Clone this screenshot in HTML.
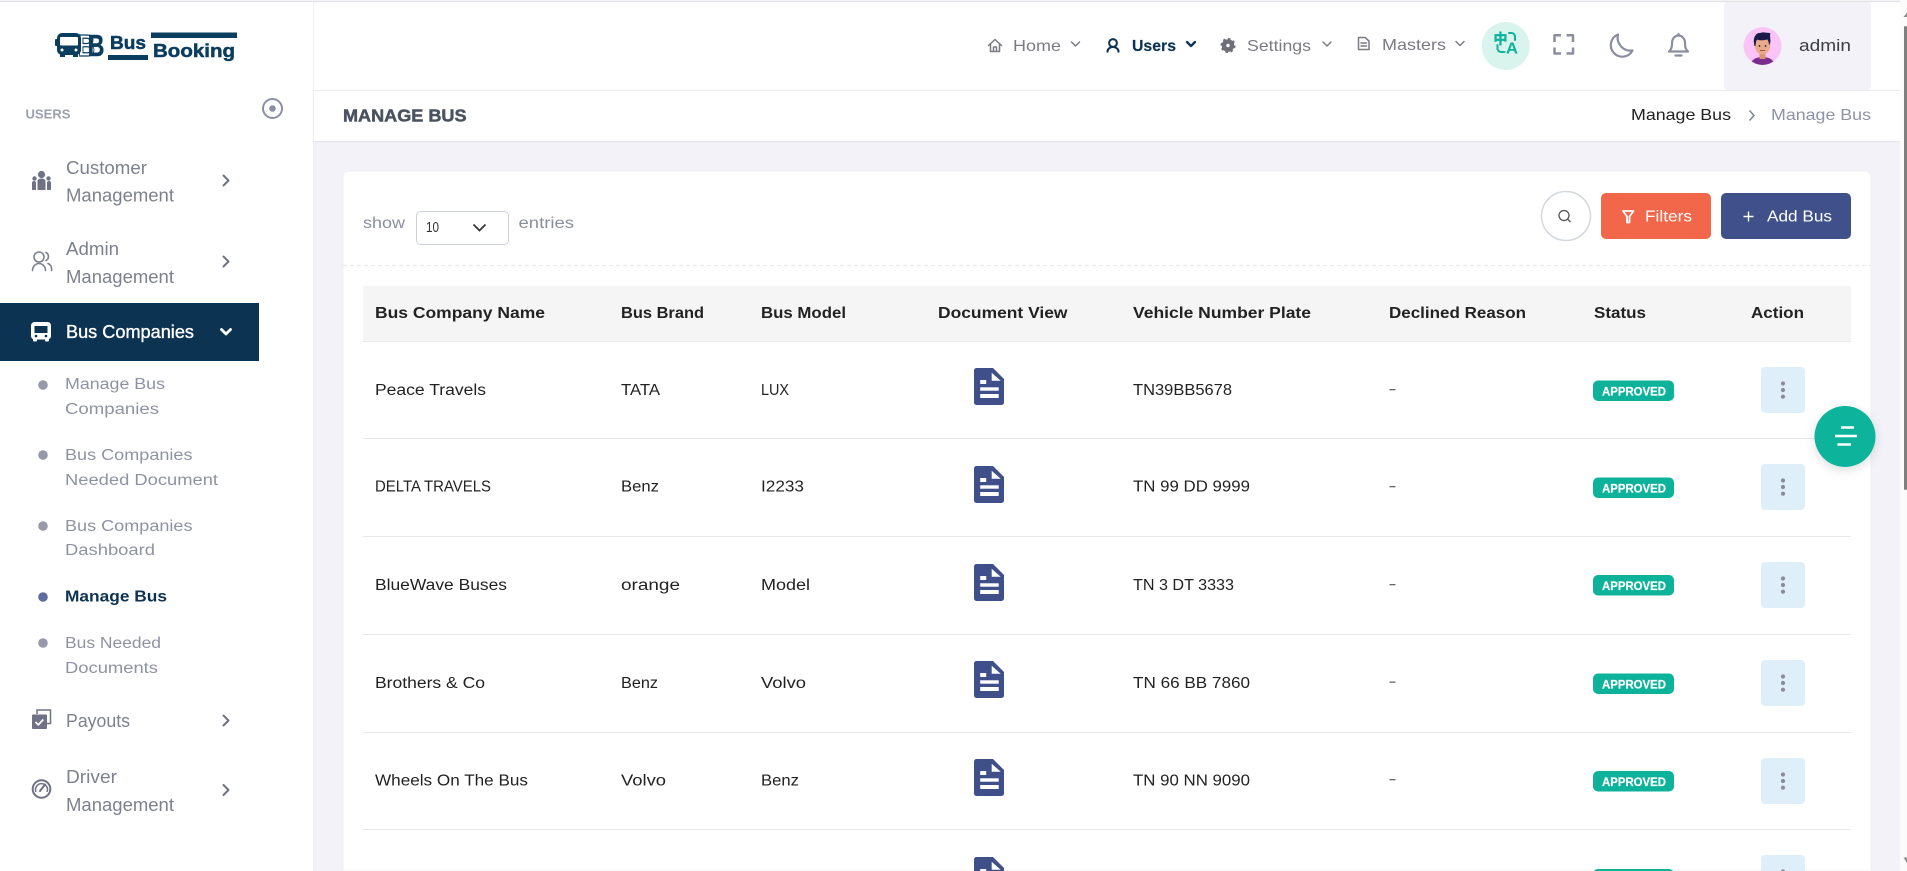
<!DOCTYPE html>
<html lang="en"><head><meta charset="utf-8"><title>Manage Bus</title>
<style>
html,body{margin:0;padding:0;width:1907px;height:871px;overflow:hidden;background:#f2f2f8}
svg{display:block}
text{font-family:"Liberation Sans","Noto Sans CJK SC",sans-serif}
.par{font-size:18px;fill:#7d8090}
.sub{font-size:15.5px;fill:#8f92a3}
.nav{font-size:16px;fill:#7b7b85}
.th{font-size:15.5px;font-weight:700;fill:#222}
.td{font-size:15.5px;fill:#222}
.bd{font-size:11.5px;font-weight:700;fill:#fff}
.btn{font-size:16px;fill:#fff}
.ln{fill:none;stroke:#7d8090;stroke-width:1.6;stroke-linecap:round;stroke-linejoin:round}
.ch{fill:none;stroke:#6f7285;stroke-width:2;stroke-linecap:round;stroke-linejoin:round}
.nc{fill:none;stroke:#7b7b85;stroke-width:1.5;stroke-linecap:round;stroke-linejoin:round}
.ic{fill:none;stroke:#8b8da0;stroke-width:2.2;stroke-linecap:round;stroke-linejoin:round}
</style></head><body>
<svg xmlns="http://www.w3.org/2000/svg" width="1907" height="871" viewBox="0 0 1907 871">
<defs>
<filter id="s" x="-30%" y="-30%" width="160%" height="170%"><feDropShadow dx="0" dy="3" stdDeviation="5" flood-color="#000" flood-opacity=".13"/></filter>
<g id="doc"><path d="M2.500 0H19L30 11V34.500a2.500 2.500 0 0 1-2.500 2.500H2.500A2.500 2.500 0 0 1 0 34.500V2.500A2.500 2.500 0 0 1 2.500 0Z" fill="#3f4f8a"/><path d="M17.700 4.700L26.700 12.700H17.700Z" fill="#fff"/><rect x="6.200" y="12" width="6" height="4" fill="#fff"/><rect x="6.200" y="19.300" width="18.500" height="3.400" fill="#fff"/><rect x="6.200" y="26" width="18.500" height="4" fill="#fff"/></g>
<g id="act"><rect x="0" y="0" width="44" height="46" rx="4" fill="#dfeffa"/><circle cx="22" cy="16.500" r="2.100" fill="#8a8c9e"/><circle cx="22" cy="23" r="2.100" fill="#8a8c9e"/><circle cx="22" cy="29.700" r="2.100" fill="#8a8c9e"/></g>
<g id="badge"><rect x="0" y="0" width="81" height="20.500" rx="5" fill="#0cb39a"/><text class="bd" x="9" y="15" textLength="64" lengthAdjust="spacingAndGlyphs" stroke="#fff" stroke-width=".2">APPROVED</text></g>
</defs>

<!-- page background -->
<rect width="1907" height="871" fill="#f2f2f8"/>

<!-- header -->
<rect x="314" y="2" width="1586" height="88" fill="#fff"/>
<rect x="314" y="90" width="1586" height="1" fill="#ebebef"/>
<rect x="314" y="91" width="1586" height="50" fill="#fff"/>
<rect x="314" y="141" width="1586" height="1" fill="#e6e6ee"/>
<rect x="314" y="142" width="1586" height="1" fill="#eeeef5"/>
<rect x="1724" y="2" width="147" height="88" rx="4" fill="#f2f2f8"/>
<rect y="1" width="1900" height="1.200" fill="#e4e4e4"/>

<!-- sidebar -->
<rect x="0" y="2" width="313" height="869" fill="#fff"/>
<rect x="313" y="91" width="1" height="780" fill="#ebebf2"/>
<!-- logo -->
<g fill="#0b3d5f">
<rect x="57" y="33" width="24" height="22" rx="5"/>
<rect x="55" y="39" width="2.500" height="7" rx="1"/>
<rect x="60" y="37" width="18" height="8.500" rx="1" fill="#fff"/>
<rect x="60" y="54" width="5" height="3"/><rect x="73" y="54" width="5" height="3"/>
<circle cx="62" cy="50" r="1.500" fill="#fff"/><circle cx="76" cy="50" r="1.500" fill="#fff"/>
<text x="78" y="56" font-size="31" font-weight="700" fill="none" stroke="#0b3d5f" stroke-width="1.200" textLength="17" lengthAdjust="spacingAndGlyphs">B</text>
<text x="87.500" y="56" font-size="31" font-weight="700" stroke="#0b3d5f" stroke-width=".4" textLength="17" lengthAdjust="spacingAndGlyphs">B</text>
<text x="110" y="49" font-size="18" font-weight="700" stroke="#0b3d5f" stroke-width=".5" textLength="36" lengthAdjust="spacingAndGlyphs">Bus</text>
<rect x="108" y="55" width="40" height="5"/>
<rect x="151" y="32.500" width="86" height="5.500"/>
<text x="153" y="57" font-size="18.500" font-weight="700" stroke="#0b3d5f" stroke-width=".5" textLength="82" lengthAdjust="spacingAndGlyphs">Booking</text>
</g>
<text x="25.500" y="118.500" font-size="12.500" font-weight="700" fill="#9aa0ad" textLength="45" lengthAdjust="spacingAndGlyphs">USERS</text>
<circle cx="272.500" cy="108.500" r="9.500" fill="none" stroke="#8c8fa3" stroke-width="2"/><circle cx="272.500" cy="108.500" r="3.300" fill="#8c8fa3"/>

<!-- customer mgmt -->
<g fill="#6f7285"><circle cx="41.500" cy="174.500" r="3.600"/><circle cx="34.500" cy="178.500" r="2.200"/><circle cx="48.500" cy="178.500" r="2.200"/>
<path d="M37.500 181a4 2.500 0 0 1 8 0V190h-8Z"/><path d="M32 183a2 2 0 0 1 4 0V190h-4Z"/><path d="M47 183a2 2 0 0 1 4 0V190h-4Z"/></g>
<text class="par" x="66" y="174" textLength="81" lengthAdjust="spacingAndGlyphs">Customer</text>
<text class="par" x="66" y="201.500" textLength="108" lengthAdjust="spacingAndGlyphs">Management</text>
<path class="ch" d="M223.500 175.500L228.500 180.500L223.500 185.500"/>
<!-- admin mgmt -->
<circle class="ln" cx="39" cy="257" r="5"/><path class="ln" d="M32.500 270.500a6.500 7 0 0 1 13 0M46 252.500a4.500 4.500 0 0 1 0 8M48 263.500a5.500 6 0 0 1 3.500 7"/>
<text class="par" x="66" y="255" textLength="53" lengthAdjust="spacingAndGlyphs">Admin</text>
<text class="par" x="66" y="283" textLength="108" lengthAdjust="spacingAndGlyphs">Management</text>
<path class="ch" d="M223.500 256.500L228.500 261.500L223.500 266.500"/>
<!-- active -->
<rect x="0" y="303" width="259" height="58" fill="#0d3352"/>
<rect x="31" y="322" width="20" height="17.500" rx="3.500" fill="#fff"/><rect x="33" y="338" width="4" height="3.500" rx="1" fill="#fff"/><rect x="45" y="338" width="4" height="3.500" rx="1" fill="#fff"/>
<rect x="34.500" y="326" width="13" height="7" fill="#0d3352"/><circle cx="36" cy="336" r="1.300" fill="#0d3352"/><circle cx="46" cy="336" r="1.300" fill="#0d3352"/>
<text x="66" y="338" font-size="18" fill="#fff" stroke="#fff" stroke-width=".35" textLength="128" lengthAdjust="spacingAndGlyphs">Bus Companies</text>
<path d="M221.500 329.500L226 334L230.500 329.500" fill="none" stroke="#fff" stroke-width="2.800" stroke-linecap="round" stroke-linejoin="round"/>

<!-- sub items -->
<circle cx="43" cy="385" r="4.800" fill="#9799a8"/>
<text class="sub" x="65" y="389" textLength="100" lengthAdjust="spacingAndGlyphs">Manage Bus</text>
<text class="sub" x="65" y="414" textLength="94" lengthAdjust="spacingAndGlyphs">Companies</text>
<circle cx="43" cy="455" r="4.800" fill="#9799a8"/>
<text class="sub" x="65" y="460" textLength="127.500" lengthAdjust="spacingAndGlyphs">Bus Companies</text>
<text class="sub" x="65" y="485" textLength="153" lengthAdjust="spacingAndGlyphs">Needed Document</text>
<circle cx="43" cy="526" r="4.800" fill="#9799a8"/>
<text class="sub" x="65" y="531" textLength="127.500" lengthAdjust="spacingAndGlyphs">Bus Companies</text>
<text class="sub" x="65" y="555" textLength="90" lengthAdjust="spacingAndGlyphs">Dashboard</text>
<circle cx="43" cy="597" r="4.800" fill="#5f6a9e"/>
<text x="65" y="601.500" font-size="15.500" font-weight="700" fill="#0d3352" textLength="102" lengthAdjust="spacingAndGlyphs">Manage Bus</text>
<circle cx="43" cy="643" r="4.800" fill="#9799a8"/>
<text class="sub" x="65" y="648" textLength="96" lengthAdjust="spacingAndGlyphs">Bus Needed</text>
<text class="sub" x="65" y="673" textLength="93" lengthAdjust="spacingAndGlyphs">Documents</text>

<!-- payouts -->
<path d="M37 714V710h13.500v13.500H47" fill="none" stroke="#6f7285" stroke-width="1.500"/>
<rect x="32" y="714.500" width="15" height="14.500" rx="1" fill="#6f7285"/>
<path d="M35.500 722l2.800 2.800 5-5.300" fill="none" stroke="#fff" stroke-width="1.700"/>
<text class="par" x="66" y="727" textLength="64" lengthAdjust="spacingAndGlyphs">Payouts</text>
<path class="ch" d="M223.500 715.500L228.500 720.500L223.500 725.500"/>
<!-- driver -->
<circle cx="41.500" cy="789" r="8.800" fill="none" stroke="#6f7285" stroke-width="2"/>
<path d="M36 792a6 6 0 1 1 11 0" fill="none" stroke="#6f7285" stroke-width="1.500"/>
<path d="M40 791L45 784.500" stroke="#6f7285" stroke-width="2" stroke-linecap="round"/>
<text class="par" x="66" y="783" textLength="51" lengthAdjust="spacingAndGlyphs">Driver</text>
<text class="par" x="66" y="811" textLength="108" lengthAdjust="spacingAndGlyphs">Management</text>
<path class="ch" d="M223.500 785L228.500 790L223.500 795"/>

<!-- top navigation -->
<path class="nc" d="M988.500 45.500L995 39.500L1001.500 45.500M990.500 44V51.500H999.500V44M993.500 51.500V47H996.500V51.500"/>
<text class="nav" x="1013" y="51" textLength="48" lengthAdjust="spacingAndGlyphs">Home</text>
<path class="nc" d="M1071.500 42L1075.500 46L1079.500 42"/>
<circle cx="1113" cy="43" r="3.900" fill="none" stroke="#0d3352" stroke-width="2"/><path d="M1107.500 52.500v-1a5.500 4.500 0 0 1 11 0v1" fill="none" stroke="#0d3352" stroke-width="2"/>
<text x="1132" y="51" font-size="16" font-weight="700" fill="#0d3352" stroke="#0d3352" stroke-width=".2" textLength="44" lengthAdjust="spacingAndGlyphs">Users</text>
<path d="M1187 42L1191 46L1195 42" fill="none" stroke="#0d3352" stroke-width="2.300" stroke-linecap="round" stroke-linejoin="round"/>
<circle cx="1228" cy="45.500" r="4" fill="none" stroke="#6e6e78" stroke-width="4.600"/><circle cx="1228" cy="45.500" r="6.800" fill="none" stroke="#6e6e78" stroke-width="1.500" stroke-dasharray="2.600 2.700"/>
<text class="nav" x="1247" y="51" textLength="64" lengthAdjust="spacingAndGlyphs">Settings</text>
<path class="nc" d="M1323 42L1327 46L1331 42"/>
<path class="nc" d="M1358.500 37.500H1365L1369 41V49.500H1358.500ZM1361 43H1366.500M1361 46H1366.500" stroke-width="1.300"/>
<text class="nav" x="1382" y="50" textLength="64" lengthAdjust="spacingAndGlyphs">Masters</text>
<path class="nc" d="M1456 41.500L1460 45.500L1464 41.500"/>

<circle cx="1505.700" cy="46" r="24" fill="#d9f4ed"/>
<text x="1493.500" y="44" font-size="14" font-weight="700" fill="#0cb39a" stroke="#0cb39a" stroke-width=".5" style="font-family:'Noto Sans CJK SC',sans-serif">中</text>
<text x="1506" y="53.500" font-size="16" font-weight="700" fill="#0cb39a" textLength="12" lengthAdjust="spacingAndGlyphs">A</text>
<path d="M1509 33h2.500a3.500 3.500 0 0 1 3.500 3.500V40M1497.500 45v3.500a3.500 3.500 0 0 0 3.500 3.500h3.500" fill="none" stroke="#0cb39a" stroke-width="2" stroke-linecap="round"/>

<path class="ic" style="stroke-linecap:butt;stroke-width:2.500" d="M1554.500 42V35.200H1561M1566.500 35.200H1573V42M1573 47.500V53.500H1566.500M1561 53.500H1554.500V47.500"/>
<path class="ic" d="M1618 34.500A11.500 11.500 0 1 0 1632.500 50.500A13 13 0 0 1 1618 34.500Z"/>
<path class="ic" d="M1669 51.500c2-2 3-3.500 3-8.500a6.500 7.500 0 0 1 13 0c0 5 1 6.500 3 8.500ZM1678.500 35.500V34M1675.500 55.500h6"/>

<!-- avatar -->
<clipPath id="av"><circle cx="1762.500" cy="46" r="19"/></clipPath>
<circle cx="1762.500" cy="46" r="19" fill="#fbc4f7"/>
<g clip-path="url(#av)"><path d="M1750 66c1-7 7-9 12.500-9s11.500 2 12.500 9Z" fill="#7b2d8e"/><rect x="1759.500" y="52" width="6" height="7" fill="#d9936f"/><ellipse cx="1762.500" cy="46" rx="7.500" ry="8.500" fill="#eaab8a"/>
<path d="M1754.500 46c-2-8 1-12 4-13 3 0 3-1 6-.5s5 0 6 1c-1 2 0 5 0 8-.5 2-1 3-1.500 4 0-3-1-6-2-6-4 1-8 1-10 0-1 2-1.500 4-1.500 6.500Z" fill="#1a1a4a"/>
<circle cx="1759.500" cy="46" r=".9" fill="#222"/><circle cx="1765.500" cy="46" r=".9" fill="#222"/><path d="M1760 50.500h5" stroke="#a5502f" stroke-width=".9"/></g>
<text x="1799" y="51" font-size="16.500" fill="#3c3c44" textLength="52" lengthAdjust="spacingAndGlyphs">admin</text>

<!-- title bar -->
<text x="343" y="121.500" font-size="17.500" font-weight="700" fill="#4a5260" stroke="#4a5260" stroke-width=".5" textLength="123.500" lengthAdjust="spacingAndGlyphs">MANAGE BUS</text>
<text x="1631" y="120" font-size="16" fill="#222" textLength="100" lengthAdjust="spacingAndGlyphs">Manage Bus</text>
<path d="M1749.500 110.500L1754 115.500L1749.500 120.500" fill="none" stroke="#7f8291" stroke-width="1.500"/>
<text x="1771" y="120" font-size="16" fill="#8d92a6" textLength="100" lengthAdjust="spacingAndGlyphs">Manage Bus</text>

<!-- card -->
<path d="M349 171H1865a6 6 0 0 1 6 6V871H343V177a6 6 0 0 1 6-6Z" fill="#fff" stroke="#eeeef4" stroke-width=".8"/>
<text x="363" y="228" font-size="15.500" fill="#8b8e9c" textLength="42" lengthAdjust="spacingAndGlyphs">show</text>
<rect x="416.500" y="211.500" width="92" height="33" rx="4" fill="#fff" stroke="#ced2dc"/>
<text x="426" y="232" font-size="14.500" fill="#333" textLength="13" lengthAdjust="spacingAndGlyphs">10</text>
<path d="M473.500 224.500L479.500 230.500L485.500 224.500" fill="none" stroke="#333" stroke-width="1.700"/>
<text x="518.500" y="228" font-size="15.500" fill="#8b8e9c" textLength="55.500" lengthAdjust="spacingAndGlyphs">entries</text>

<circle cx="1566" cy="216" r="24.500" fill="#fff" stroke="#d3d7de" stroke-width="1.500"/>
<circle cx="1564" cy="215.500" r="5" fill="none" stroke="#555" stroke-width="1.300"/><path d="M1567.800 219.300L1570.500 222" stroke="#555" stroke-width="1.300"/>
<rect x="1601" y="193" width="110" height="46" rx="5" fill="#f2674a"/>
<path d="M1623 211H1633.500L1629.500 216.500V222.500H1627V216.500Z" fill="none" stroke="#fff" stroke-width="1.800" stroke-linejoin="round"/>
<text class="btn" x="1645" y="221.500" textLength="47" lengthAdjust="spacingAndGlyphs">Filters</text>
<rect x="1721" y="193" width="130" height="46" rx="5" fill="#40508a"/>
<path d="M1748.500 211.500V221.500M1743.500 216.500H1753.500" stroke="#fff" stroke-width="1.400"/>
<text class="btn" x="1767" y="221.500" textLength="65" lengthAdjust="spacingAndGlyphs">Add Bus</text>
<path d="M343 265.500H1871" stroke="#e8e8ee" stroke-dasharray="4 3"/>

<!-- table head -->
<rect x="363" y="286" width="1488" height="55" fill="#f5f5f5"/>
<g>
<text class="th" x="375" y="318" textLength="170" lengthAdjust="spacingAndGlyphs">Bus Company Name</text>
<text class="th" x="621" y="318" textLength="83" lengthAdjust="spacingAndGlyphs">Bus Brand</text>
<text class="th" x="761" y="318" textLength="85" lengthAdjust="spacingAndGlyphs">Bus Model</text>
<text class="th" x="938" y="318" textLength="129.500" lengthAdjust="spacingAndGlyphs">Document View</text>
<text class="th" x="1133" y="318" textLength="178" lengthAdjust="spacingAndGlyphs">Vehicle Number Plate</text>
<text class="th" x="1389" y="318" textLength="137" lengthAdjust="spacingAndGlyphs">Declined Reason</text>
<text class="th" x="1594" y="318" textLength="52" lengthAdjust="spacingAndGlyphs">Status</text>
<text class="th" x="1751" y="318" textLength="53" lengthAdjust="spacingAndGlyphs">Action</text>
</g>
<g fill="#e8e8e8">
<rect x="363" y="341" width="1488" height="1"/><rect x="363" y="438" width="1488" height="1"/><rect x="363" y="536" width="1488" height="1"/><rect x="363" y="634" width="1488" height="1"/><rect x="363" y="732" width="1488" height="1"/><rect x="363" y="829" width="1488" height="1"/>
</g>

<!-- row 1 -->
<text class="td" x="375" y="395" textLength="111" lengthAdjust="spacingAndGlyphs">Peace Travels</text>
<text class="td" x="621" y="395" textLength="39" lengthAdjust="spacingAndGlyphs">TATA</text>
<text class="td" x="761" y="395" textLength="28" lengthAdjust="spacingAndGlyphs">LUX</text>
<use href="#doc" x="974" y="368"/>
<text class="td" x="1133" y="395" textLength="99" lengthAdjust="spacingAndGlyphs">TN39BB5678</text>
<rect x="1389.500" y="389" width="6" height="1.300" fill="#666"/>
<use href="#badge" x="1593" y="380.500"/><use href="#act" x="1761" y="367"/>
<!-- row 2 -->
<text class="td" x="375" y="491.500" textLength="116" lengthAdjust="spacingAndGlyphs">DELTA TRAVELS</text>
<text class="td" x="621" y="491.500" textLength="38" lengthAdjust="spacingAndGlyphs">Benz</text>
<text class="td" x="761" y="491.500" textLength="43" lengthAdjust="spacingAndGlyphs">I2233</text>
<use href="#doc" x="974" y="466"/>
<text class="td" x="1133" y="491.500" textLength="117" lengthAdjust="spacingAndGlyphs">TN 99 DD 9999</text>
<rect x="1389.500" y="486" width="6" height="1.300" fill="#666"/>
<use href="#badge" x="1593" y="477.500"/><use href="#act" x="1761" y="464"/>
<!-- row 3 -->
<text class="td" x="375" y="590" textLength="132" lengthAdjust="spacingAndGlyphs">BlueWave Buses</text>
<text class="td" x="621" y="590" textLength="59" lengthAdjust="spacingAndGlyphs">orange</text>
<text class="td" x="761" y="590" textLength="49" lengthAdjust="spacingAndGlyphs">Model</text>
<use href="#doc" x="974" y="564"/>
<text class="td" x="1133" y="590" textLength="101" lengthAdjust="spacingAndGlyphs">TN 3 DT 3333</text>
<rect x="1389.500" y="584" width="6" height="1.300" fill="#666"/>
<use href="#badge" x="1593" y="575"/><use href="#act" x="1761" y="562"/>
<!-- row 4 -->
<text class="td" x="375" y="688" textLength="110" lengthAdjust="spacingAndGlyphs">Brothers &amp; Co</text>
<text class="td" x="621" y="688" textLength="37" lengthAdjust="spacingAndGlyphs">Benz</text>
<text class="td" x="761" y="688" textLength="45" lengthAdjust="spacingAndGlyphs">Volvo</text>
<use href="#doc" x="974" y="661"/>
<text class="td" x="1133" y="688" textLength="117" lengthAdjust="spacingAndGlyphs">TN 66 BB 7860</text>
<rect x="1389.500" y="681.500" width="6" height="1.300" fill="#666"/>
<use href="#badge" x="1593" y="673.500"/><use href="#act" x="1761" y="660"/>
<!-- row 5 -->
<text class="td" x="375" y="785.500" textLength="153" lengthAdjust="spacingAndGlyphs">Wheels On The Bus</text>
<text class="td" x="621" y="785.500" textLength="45" lengthAdjust="spacingAndGlyphs">Volvo</text>
<text class="td" x="761" y="785.500" textLength="38" lengthAdjust="spacingAndGlyphs">Benz</text>
<use href="#doc" x="974" y="759"/>
<text class="td" x="1133" y="785.500" textLength="117" lengthAdjust="spacingAndGlyphs">TN 90 NN 9090</text>
<rect x="1389.500" y="779" width="6" height="1.300" fill="#666"/>
<use href="#badge" x="1593" y="771"/><use href="#act" x="1761" y="758"/>
<!-- row 6 (cut off) -->
<use href="#doc" x="974" y="857"/>
<use href="#badge" x="1593" y="869"/><use href="#act" x="1761" y="855"/>

<!-- floating button -->
<circle cx="1845" cy="436.500" r="30.500" fill="#0cb39a" filter="url(#s)"/>
<path d="M1841 427.500H1854M1835 436H1857M1837.500 444.500H1851" stroke="#fff" stroke-width="2.500"/>

<!-- scrollbar -->
<rect x="1900" y="0" width="7" height="871" fill="#fbfbfb"/>
<rect x="1904" y="26" width="3" height="464" rx="1.500" fill="#7f7f7f"/>
<path d="M1903.500 17L1907 12.500V17Z" fill="#8a8a8a"/>
<path d="M1903.500 857.500H1907V863Z" fill="#8a8a8a"/>
</svg>
</body></html>
